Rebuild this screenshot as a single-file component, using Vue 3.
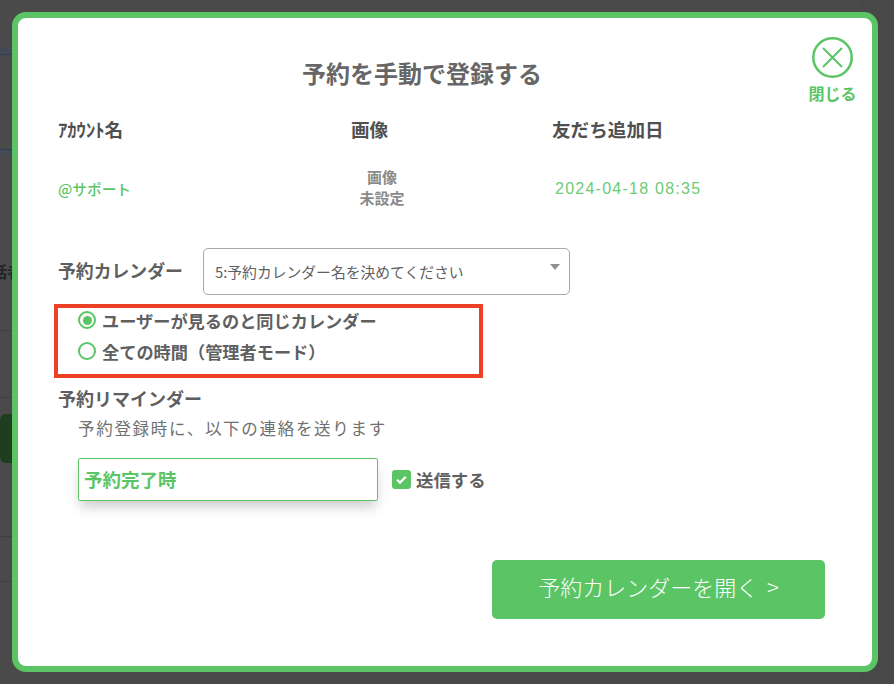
<script setup>
const columns = [
  { label: 'ｱｶｳﾝﾄ名', cls: 'c1' },
  { label: '画像', cls: 'c2' },
  { label: '友だち追加日', cls: 'c3' }
]
</script>

<template>
  <div class="backdrop">
    <div class="bg-lines" aria-hidden="true">
      <i class="bl b1"></i><i class="bl b2"></i><i class="bl b3"></i><i class="bl b4"></i><i class="bl b5"></i><i class="bl b6"></i>
      <span class="bg-text">話者</span>
      <i class="bg-btn"></i>
      <i class="bg-right"></i>
    </div>
    <section class="modal">
      <button class="close">
        <svg width="41" height="41" viewBox="0 0 41 41" fill="none" stroke="#5bc566">
          <circle cx="20.5" cy="20.5" r="19.2" stroke-width="2.5" />
          <path d="M11 11 30 30M30 11 11 30" stroke-width="2" />
        </svg>
        <span>閉じる</span>
      </button>
      <h1 class="title">予約を手動で登録する</h1>
      <div class="table-head">
        <div v-for="c in columns" :key="c.cls" :class="c.cls">{{ c.label }}</div>
      </div>
      <div class="table-row">
        <div class="c1 account">@サポート</div>
        <div class="c2 noimage">画像<br />未設定</div>
        <div class="c3 date">2024-04-18 08:35</div>
      </div>
      <div class="cal-row">
        <label class="cal-label">予約カレンダー</label>
        <div class="select">
          <span>5:予約カレンダー名を決めてください</span>
          <i class="caret"></i>
        </div>
      </div>
      <div class="radios">
        <div class="radio-line"><i class="radio on"></i>ユーザーが見るのと同じカレンダー</div>
        <div class="radio-line"><i class="radio"></i>全ての時間（管理者モード）</div>
      </div>
      <h2 class="rem-title">予約リマインダー</h2>
      <p class="rem-desc">予約登録時に、以下の連絡を送ります</p>
      <div class="rem-row">
        <div class="rem-box">予約完了時</div>
        <div class="check">
          <svg width="19" height="19" viewBox="0 0 19 19">
            <rect width="19" height="19" rx="3" fill="#5bc566" />
            <path d="M5 9.8 8 12.6 13.8 6.8" fill="none" stroke="#fff" stroke-width="2.2" />
          </svg>
          <span>送信する</span>
        </div>
      </div>
      <div class="actions">
        <button class="open">予約カレンダーを開く &gt;</button>
      </div>
    </section>
  </div>
</template>

<style>
html, body { margin: 0; padding: 0; background: #4a4a4a; }
</style>

<style scoped>
* { box-sizing: border-box; }
.backdrop {
  position: relative;
  width: 894px;
  height: 684px;
  overflow: hidden;
  background: #4a4a4a;
  padding: 12px 0 0 12px;
  font-family: "Noto Sans CJK JP", "Noto Sans", sans-serif;
  color: #555;
}
.bg-lines { position: absolute; inset: 0; }
.bl { position: absolute; left: 0; width: 12px; height: 1px; background: #3f3f3f; }
.b1 { top: 48px; height: 7px; background: #434a55; border-bottom: 1px solid #2c3f58; }
.b2 { top: 149px; height: 6px; background: #434a55; border-top: 1px solid #2c3f58; }
.b3 { top: 330px; }
.b4 { top: 536px; }
.b5 { top: 581px; }
.b6 { top: 397px; }
.bg-text { position: absolute; left: -9px; top: 259px; font-size: 16px; font-weight: 700; color: #262626; white-space: nowrap; }
.bg-btn { position: absolute; left: 0; top: 414px; width: 12px; height: 49px; background: #1d3f1f; border-radius: 6px 0 0 6px; }
.bg-right { position: absolute; top: 0; right: 0; bottom: 0; width: 35px; background: #484848; }
.modal {
  position: relative;
  width: 866px;
  height: 660px;
  background: #fff;
  border: 6px solid #5bc566;
  border-radius: 14px;
  padding: 0 0 0 40px;
}
.close {
  position: absolute;
  top: 19px;
  right: 15px;
  display: flex;
  flex-direction: column;
  align-items: center;
  gap: 5px;
  padding: 0;
  width: 49px;
  border: 0;
  background: none;
  color: #5bc566;
  font: 700 16px/20px "Noto Sans CJK JP", sans-serif;
}
.title {
  margin: 0;
  padding-top: 37px;
  height: 99px;
  padding-right: 86px;
  text-align: center;
  font-size: 24px;
  line-height: 36px;
  font-weight: 700;
  color: #666;
}
.table-head, .table-row { display: grid; grid-template-columns: 293px 200px 1fr; }
.table-head { height: 24px; font-size: 18.6px; line-height: 24px; font-weight: 700; color: #505050; }
.table-head .c3 { padding-left: 1px; }
.table-row { align-items: center; height: 48px; margin-top: 23px; }
.account { font-size: 14.7px; font-weight: 500; color: #5bc566; }
.noimage { width: 52px; margin-left: 5px; margin-top: -3px; text-align: center; font-size: 15px; line-height: 21px; font-weight: 700; color: #8a8a8a; }
.date { padding: 2px 0 0 4px; font-size: 16px; letter-spacing: 1.25px; color: #6ccb75; font-family: "Liberation Sans", sans-serif; }
.cal-row { display: flex; align-items: flex-start; margin-top: 36px; }
.cal-label { width: 145px; padding-top: 9px; font-size: 17.85px; line-height: 27px; font-weight: 700; color: #5f5f5f; }
.select {
  position: relative;
  width: 367px;
  height: 47px;
  padding: 0 0 0 11px;
  border: 1px solid #a8a8a8;
  border-radius: 5px;
  font-size: 14.8px;
  line-height: 45px;
  color: #5f5f5f;
}
.caret {
  position: absolute;
  top: 15px;
  right: 9px;
  width: 0;
  height: 0;
  border: 5px solid transparent;
  border-top: 6px solid #909090;
  border-bottom: 0;
}
.radios {
  display: flex;
  flex-direction: column;
  gap: 7px;
  width: 429px;
  height: 74px;
  margin: 9px 0 0 -4px;
  padding: 0 0 0 20px;
  border: 4px solid #ec4126;
}
.radio-line { display: flex; align-items: center; gap: 6px; height: 24px; font-size: 17.2px; font-weight: 700; color: #5f5f5f; }
.radio { flex: none; width: 18px; height: 18px; border: 2.5px solid #5bc566; border-radius: 50%; position: relative; }
.radio.on::after { content: ""; position: absolute; inset: 2.5px; background: #5bc566; border-radius: 50%; }
.rem-title { margin: 7px 0 0; font-size: 18px; line-height: 26px; font-weight: 700; color: #5f5f5f; }
.rem-desc { margin: 5px 0 0 20px; font-size: 16.5px; line-height: 24px; letter-spacing: 1.7px; color: #707070; font-weight: 400; }
.rem-row { display: flex; align-items: center; margin: 18px 0 0 20px; }
.rem-box {
  width: 300px;
  height: 43px;
  padding-left: 5px;
  border: 1px solid #5bc566;
  border-radius: 2px;
  box-shadow: 0 8px 12px -2px rgba(0, 0, 0, .2);
  font-size: 18.5px;
  line-height: 41px;
  font-weight: 700;
  color: #5bc566;
}
.check { display: flex; align-items: center; gap: 5px; margin-left: 14px; font-size: 17.4px; font-weight: 700; color: #5f5f5f; }
.actions { display: flex; justify-content: flex-end; margin-top: 59px; padding-right: 47px; }
.open {
  width: 333px;
  height: 59px;
  padding: 0 0 6px;
  border: 0;
  border-radius: 5px;
  background: #5bc566;
  color: #fff;
  word-spacing: 4px;
  font: 300 22px/53px "Noto Sans CJK JP", sans-serif;
}
</style>
